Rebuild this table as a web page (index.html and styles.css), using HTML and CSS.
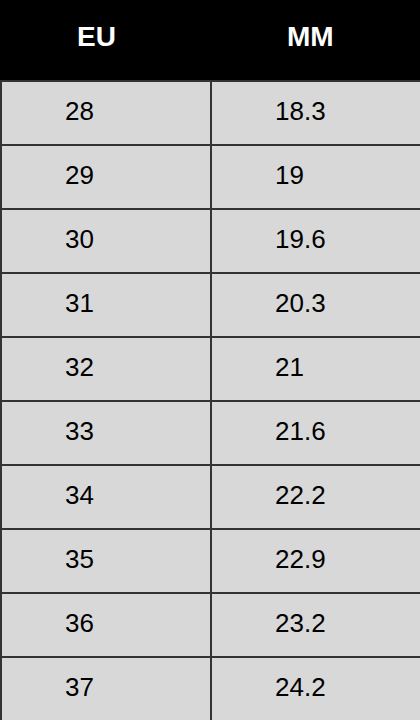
FILE: index.html
```html
<!DOCTYPE html>
<html>
<head>
<meta charset="utf-8">
<link rel="stylesheet" href="styles.css">
</head>
<body>
<div class="table">
  <div class="head">EU</div>
  <div class="head">MM</div>
  <div class="cell">28</div><div class="cell">18.3</div>
  <div class="cell">29</div><div class="cell">19</div>
  <div class="cell">30</div><div class="cell">19.6</div>
  <div class="cell">31</div><div class="cell">20.3</div>
  <div class="cell">32</div><div class="cell">21</div>
  <div class="cell">33</div><div class="cell">21.6</div>
  <div class="cell">34</div><div class="cell">22.2</div>
  <div class="cell">35</div><div class="cell">22.9</div>
  <div class="cell">36</div><div class="cell">23.2</div>
  <div class="cell">37</div><div class="cell">24.2</div>
</div>
</body>
</html>
```
FILE: styles.css
```css
html, body {
  margin: 0;
  padding: 0;
  background: #d9d8d9;
}
.table {
  display: grid;
  grid-template-columns: 210px 210px;
  width: 420px;
  font-family: "Liberation Sans", Arial, sans-serif;
  box-sizing: border-box;
  border-right: 1px solid #333;
}
.head {
  background: #000;
  color: #fff;
  font-weight: bold;
  font-size: 28px;
  height: 80px;
  box-sizing: border-box;
  padding-left: 77px;
  padding-top: 21px;
  line-height: 32px;
}
.cell {
  height: 64px;
  box-sizing: border-box;
  border-top: 2px solid #333;
  border-left: 2px solid #333;
  padding-left: 63px;
  padding-bottom: 4px;
  display: flex;
  align-items: center;
  font-size: 26px;
  color: #000;
  background: #d9d8d9;
}
```
